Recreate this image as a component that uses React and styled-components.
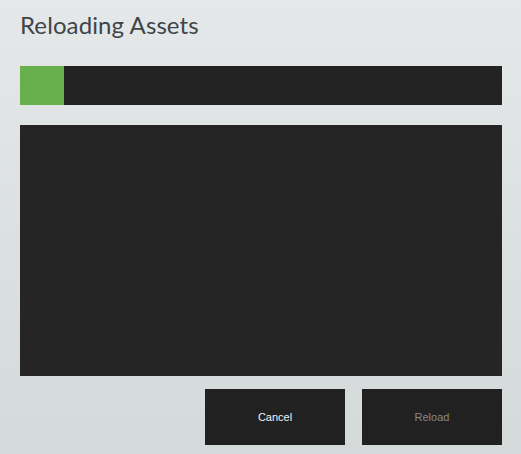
import styled, { createGlobalStyle } from 'styled-components'

const Global = createGlobalStyle`
  html, body { margin: 0; padding: 0; }
  body { background: #d5dbdb; }
`

const Dialog = styled.div`
  box-sizing: border-box;
  width: 521px;
  height: 454px;
  padding: 0 19px 0 20px;
  background: linear-gradient(180deg, #e4e8e9 0%, #d4d9d9 100%);
  display: flex;
  flex-direction: column;
  font-family: "Liberation Sans", Arial, sans-serif;
`

const Title = styled.h1`
  margin: 0;
  height: 66px;
  padding-top: 11px;
  box-sizing: border-box;
  font-family: Lato, sans-serif;
  font-weight: normal;
  font-size: 24px;
  line-height: 28px;
  letter-spacing: 0.1px;
  color: #3f4548;
`

const Progress = styled.div`
  height: 39px;
  background: #232323;
  display: flex;
`

const Fill = styled.div`
  height: 100%;
  background: #67b04c;
`

const Log = styled.div`
  margin-top: 20px;
  height: 251px;
  background: #252525;
`

const Actions = styled.div`
  margin-top: 13px;
  display: flex;
  justify-content: flex-end;
  gap: 17px;
`

const Button = styled.button`
  width: 140px;
  height: 56px;
  border: none;
  background: #212121;
  font-family: "Liberation Sans", Arial, sans-serif;
  font-size: 11px;
  color: ${p => (p.disabled ? '#888888' : '#f2f2f2')};
  cursor: ${p => (p.disabled ? 'default' : 'pointer')};
`

export default function App() {
  const progress = 44 / 482
  return (
    <>
      <Global />
      <Dialog>
        <Title>Reloading Assets</Title>
        <Progress>
          <Fill style={{ width: `${progress * 100}%` }} />
        </Progress>
        <Log />
        <Actions>
          <Button>Cancel</Button>
          <Button disabled>Reload</Button>
        </Actions>
      </Dialog>
    </>
  )
}
